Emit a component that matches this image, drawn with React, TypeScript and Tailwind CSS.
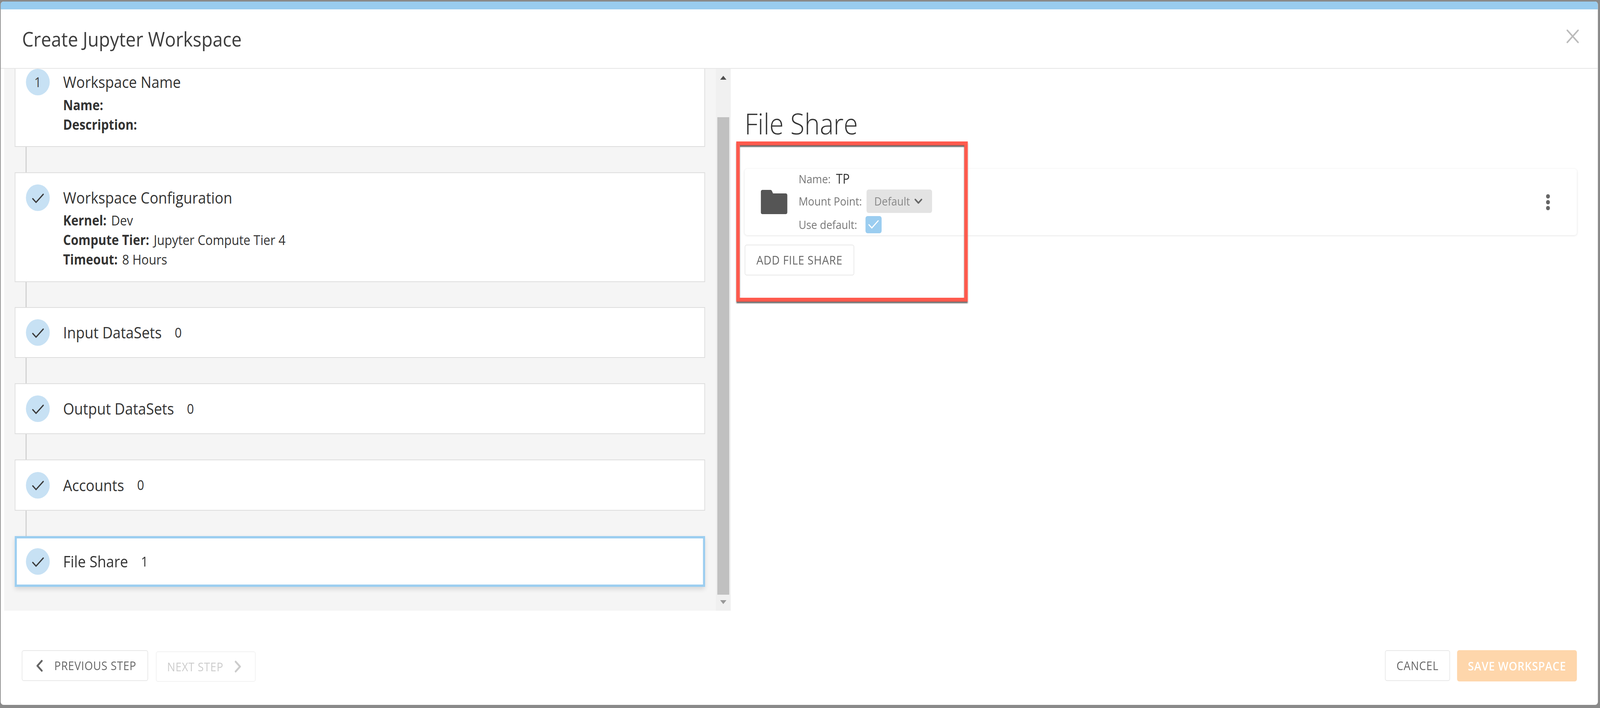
import type { ReactNode } from "react";
import { Check, ChevronDown, ChevronLeft, ChevronRight, X } from "lucide-react";

// layout is drawn at the reference width, then fitted to whatever the window really is
const fitX = typeof window === "undefined" ? 1 : window.innerWidth / 4568;

const StepCircle = ({ label }: { label?: string }) => (
  <div className="flex h-[68px] w-[68px] shrink-0 items-center justify-center rounded-full bg-[#c7e1f4] text-[35px] text-[#444]">
    {label ? label : <Check className="mt-[4px] h-[45px] w-[45px]" strokeWidth={1.8} color="#3a3a3a" />}
  </div>
);

const Connector = ({ height }: { height: string }) => (
  <div className={`ml-[31px] w-[3px] bg-[#cfcfcf] ${height}`} />
);

const Line = ({ label, value }: { label: string; value?: string }) => (
  <div className="flex h-[50px] items-center gap-[13px] text-[35px] text-[#333]">
    <span className="font-bold">{label}</span>
    {value && <span>{value}</span>}
  </div>
);

const CountStep = ({ title, count, height }: { title: string; count: number; height: string }) => (
  <div className={`flex items-center gap-[38px] border-2 border-[#dddddd] bg-white pl-[30px] ${height}`}>
    <StepCircle />
    <span className="text-[41px] font-medium text-[#333]">{title}</span>
    <span className="ml-[-1px] text-[35px] text-[#333]">{count}</span>
  </div>
);

const ActionButton = ({ children, className }: { children: ReactNode; className: string }) => (
  <button className={`flex items-center rounded-[6px] text-[31px] font-medium tracking-[0.8px] ${className}`}>
    {children}
  </button>
);

export default function App() {
  return (
    <div className="h-screen w-screen overflow-hidden bg-[#8a8a8a]">
      <div
        className="h-[1812px] w-[4568px] origin-top-left pb-[8px] pl-[2px] pr-[6px] pt-[4px] font-['Open_Sans',sans-serif]"
        style={{ transform: `scaleX(${fitX})` }}
      >
        <div className="flex h-full flex-col overflow-hidden rounded-[8px] bg-white">
          <div className="h-[20px] shrink-0 bg-[#99ccef]" />

          <header className="flex h-[152px] shrink-0 items-center justify-between border-b-2 border-[#e6e6e6] pl-[61px] pr-[41px]">
            <h1 className="text-[52px] font-medium text-[#3d3d3d]">Create Jupyter Workspace</h1>
            <X className="mb-[13px] h-[62px] w-[62px]" strokeWidth={1.55} color="#bbbbbb" />
          </header>

          <div className="flex h-[1387px] shrink-0">
            <div className="ml-[10px] flex w-[2074px] shrink-0 bg-[#f5f5f5]">
              <div className="w-[2032px] shrink-0 pl-[30px] pr-[31px]">
                <div className="h-[200px] border-x-2 border-b-2 border-[#dddddd] bg-white pl-[30px]">
                  <div className="flex items-center gap-[38px]">
                    <StepCircle label="1" />
                    <span className="text-[41px] font-medium text-[#333]">Workspace Name</span>
                  </div>
                  <div className="ml-[106px]">
                    <Line label="Name:" />
                    <Line label="Description:" />
                  </div>
                </div>
                <Connector height="h-[65px]" />
                <div className="h-[281px] border-2 border-[#dddddd] bg-white pl-[30px] pt-[29px]">
                  <div className="flex items-center gap-[38px]">
                    <StepCircle />
                    <span className="text-[41px] font-medium text-[#333]">Workspace Configuration</span>
                  </div>
                  <div className="-mt-[1px] ml-[106px]">
                    <Line label="Kernel:" value="Dev" />
                    <Line label="Compute Tier:" value="Jupyter Compute Tier 4" />
                    <Line label="Timeout:" value="8 Hours" />
                  </div>
                </div>
                <Connector height="h-[64px]" />
                <CountStep title="Input DataSets" count={0} height="h-[130px]" />
                <Connector height="h-[65px]" />
                <CountStep title="Output DataSets" count={0} height="h-[130px]" />
                <Connector height="h-[65px]" />
                <CountStep title="Accounts" count={0} height="h-[131px]" />
                <Connector height="h-[65px]" />
                <div className="flex h-[130px] items-center gap-[38px] border-[6px] border-[#9ccef0] bg-white pl-[26px] shadow-[0_6px_12px_rgba(0,0,0,0.12)]">
                  <StepCircle />
                  <span className="text-[41px] font-medium text-[#333]">File Share</span>
                  <span className="ml-[-1px] text-[35px] text-[#333]">1</span>
                </div>
              </div>

              <div className="flex w-[42px] shrink-0 flex-col items-center bg-[#f0f0f0] pt-[18px]">
                <div className="h-0 w-0 border-x-[9px] border-b-[10px] border-x-transparent border-b-[#505050]" />
                <div className="mt-[96px] h-[1222px] w-[34px] bg-[#c0c0c0]" />
                <div className="mt-[14px] h-0 w-0 border-x-[9px] border-t-[10px] border-x-transparent border-t-[#999999]" />
              </div>
            </div>

            <div className="relative flex-1 pl-[40px] pr-[60px]">
              <h2 className="mt-[90px] h-[166px] text-[74px] font-light leading-[100px] text-[#333]">File Share</h2>
              <div className="flex h-[170px] items-center rounded-[8px] bg-white pl-[46px] pr-[77px] shadow-[0_1px_6px_rgba(0,0,0,0.12)]">
                <svg className="h-[62px] w-[76px]" viewBox="0 0 76 62">
                  <path d="M5 0h22c3 0 4 1 5 3l3 6h36c3 0 5 2 5 5v43c0 3-2 5-5 5H5c-3 0-5-2-5-5V5c0-3 2-5 5-5z" fill="#555555" />
                </svg>
                <div className="ml-[32px] flex flex-col text-[30px] text-[#777]">
                  <div className="flex h-[46px] items-center gap-[15px]">
                    <span>Name:</span>
                    <span className="text-[34px] text-[#333]">TP</span>
                  </div>
                  <div className="mt-[3px] flex h-[62px] items-center gap-[13px]">
                    <span>Mount Point:</span>
                    <span className="flex h-[60px] w-[187px] items-center gap-[6px] rounded-[6px] bg-[#e3e3e3] pl-[22px] text-[#888]">
                      Default
                      <ChevronDown className="h-[36px] w-[36px]" strokeWidth={2.6} color="#666" />
                    </span>
                  </div>
                  <div className="mt-[4px] flex h-[50px] items-center gap-[24px]">
                    <span>Use default:</span>
                    <span className="flex h-[44px] w-[46px] items-center justify-center rounded-[6px] bg-[#9bcdf0]">
                      <Check className="h-[40px] w-[40px]" strokeWidth={1.8} color="#ffffff" />
                    </span>
                  </div>
                </div>
                <div className="ml-auto flex flex-col gap-[4px]">
                  <span className="h-[11px] w-[11px] rounded-full bg-[#666]" />
                  <span className="h-[11px] w-[11px] rounded-full bg-[#666]" />
                  <span className="h-[11px] w-[11px] rounded-full bg-[#666]" />
                </div>
              </div>
              <ActionButton className="mt-[24px] h-[79px] w-[313px] justify-center border-2 border-[#e8e8e8] text-[#666]">
                ADD FILE SHARE
              </ActionButton>
              <div className="absolute left-[16px] top-[186px] h-[410px] w-[661px] border-[10px] border-[#ff5a4d] shadow-[0_4px_3px_#666,inset_0_4px_3px_#666]" />
            </div>
          </div>

          <footer className="flex flex-1 items-start justify-between px-[60px] pt-[101px]">
            <div className="flex gap-[22px]">
              <ActionButton className="h-[79px] w-[361px] gap-[17px] border-2 border-[#e8e8e8] pl-[24px] text-[#666]">
                <ChevronLeft className="h-[50px] w-[50px]" strokeWidth={2.4} color="#666" />
                PREVIOUS STEP
              </ActionButton>
              <ActionButton className="mt-[3px] h-[78px] w-[285px] gap-[16px] border-2 border-[#f2f2f2] pl-[30px] text-[#cccccc]">
                NEXT STEP
                <ChevronRight className="h-[50px] w-[50px]" strokeWidth={2.4} color="#cccccc" />
              </ActionButton>
            </div>
            <div className="flex gap-[20px]">
              <ActionButton className="h-[79px] w-[186px] justify-center border-2 border-[#e8e8e8] text-[#666]">CANCEL</ActionButton>
              <ActionButton className="h-[80px] w-[342px] justify-center bg-[#fed6ab] font-semibold text-white">SAVE WORKSPACE</ActionButton>
            </div>
          </footer>
        </div>
      </div>
    </div>
  );
}
